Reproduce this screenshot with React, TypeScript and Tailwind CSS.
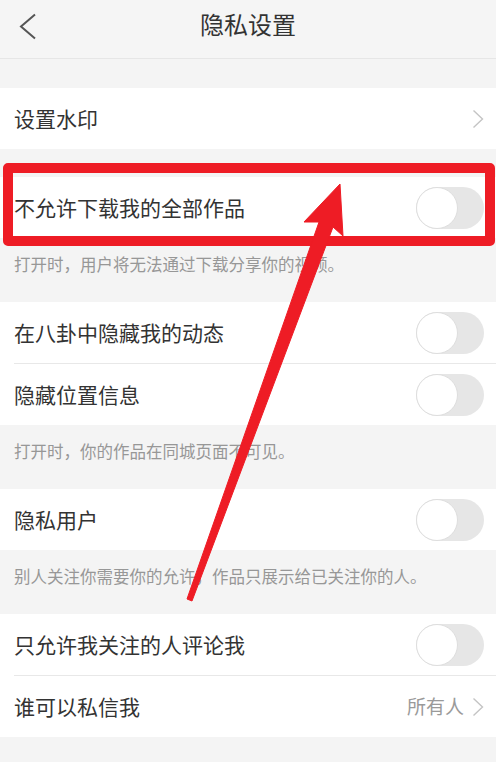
import React from 'react';

const font = { fontFamily: '"Noto Sans CJK SC", "Noto Sans", sans-serif' };

function Toggle() {
  return (
    <div className="relative w-[68px] h-[42px] rounded-full bg-[#e6e6e6]">
      <div className="absolute left-0 top-0 w-[42px] h-[42px] rounded-full bg-white border border-[#dedede]" />
    </div>
  );
}

function Chevron() {
  return (
    <svg width="12" height="20" viewBox="0 0 12 20" fill="none">
      <path d="M1.5 1.5 L10.5 10 L1.5 18.5" stroke="#c4c4c4" strokeWidth="1.4" />
    </svg>
  );
}

function Row({ label, right, divider }: { label: string; right: React.ReactNode; divider?: boolean }) {
  return (
    <div className="relative h-[61px] bg-white flex items-center justify-between pl-[14px] pr-[12px]">
      <span className="text-[21px] leading-[28px] text-[#333] -mt-[2px]">{label}</span>
      {right}
      {divider && <div className="absolute bottom-[-1px] left-[14px] right-0 h-px bg-[#e8e8e8]" />}
    </div>
  );
}

function Hint({ text }: { text: string }) {
  return (
    <div className="h-16 pl-[14px] pt-[17px] text-[16.5px] leading-[18px] text-[#979797]">{text}</div>
  );
}

export default function App() {
  return (
    <div className="relative w-[496px] h-[762px] overflow-hidden bg-[#f4f4f4]" style={font}>
      {/* Header */}
      <div className="relative h-[59px] border-b border-[#e6e6e6] bg-[#f5f5f5] flex justify-center pt-[9px]">
        <svg className="absolute left-[18px] top-[13px]" width="19" height="27" viewBox="0 0 19 27" fill="none">
          <path d="M17 1.5 L3 13.5 L17 25.5" stroke="#555" strokeWidth="2" />
        </svg>
        <span className="text-[24px] leading-[30px] text-[#333]">隐私设置</span>
      </div>

      <div className="h-[29px]" />
      <Row label="设置水印" right={<Chevron />} />
      <div className="h-[28px]" />
      <Row label="不允许下载我的全部作品" right={<Toggle />} />
      <Hint text="打开时，用户将无法通过下载分享你的视频。" />
      <Row label="在八卦中隐藏我的动态" right={<Toggle />} divider />
      <div className="h-px bg-white" />
      <Row label="隐藏位置信息" right={<Toggle />} />
      <Hint text="打开时，你的作品在同城页面不可见。" />
      <Row label="隐私用户" right={<Toggle />} />
      <Hint text="别人关注你需要你的允许，作品只展示给已关注你的人。" />
      <Row label="只允许我关注的人评论我" right={<Toggle />} divider />
      <div className="h-px bg-white" />
      <Row
        label="谁可以私信我"
        right={
          <div className="flex items-center gap-[8px]">
            <span className="text-[19px] leading-[26px] text-[#9a9a9a] -mt-[2px]">所有人</span>
            <Chevron />
          </div>
        }
      />

      {/* Annotation: red box */}
      <div className="absolute left-[3px] top-[163px] w-[492px] h-[83px] border-[10px] border-[#ee1c25] rounded-[5px]" />

      {/* Annotation: arrow */}
      <svg className="absolute left-0 top-0" width="496" height="762" viewBox="0 0 496 762">
        <polygon
          points="340,184 343,236 333,227 192,601 187,599 319,222 304,222"
          fill="#ee1c25"
          strokeLinejoin="round"
          stroke="#ee1c25"
          strokeWidth="1"
        />
      </svg>
    </div>
  );
}
